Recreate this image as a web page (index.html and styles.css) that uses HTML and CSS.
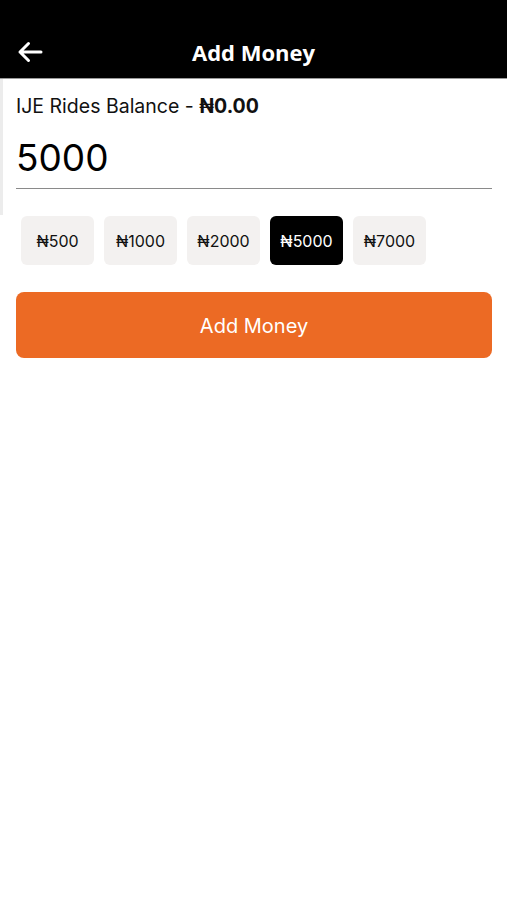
FILE: index.html
```html
<!DOCTYPE html>
<html>
<head>
<meta charset="utf-8">
<link rel="stylesheet" href="styles.css">
</head>
<body>
<div class="screen">
  <header class="topbar">
    <button class="back" aria-label="Back">
      <svg width="28" height="22" viewBox="0 0 28 22"><path d="M25 11H4M12.5 2.5L4 11l8.5 8.5" fill="none" stroke="#fff" stroke-width="3" stroke-linecap="round" stroke-linejoin="round"/></svg>
    </button>
    <h1 class="title">Add Money</h1>
  </header>
  <main class="content">
    <div class="edge"></div>
    <p class="balance">IJE Rides Balance - <b>₦0.00</b></p>
    <div class="amount">5000</div>
    <div class="chips">
      <span class="chip">₦500</span>
      <span class="chip">₦1000</span>
      <span class="chip">₦2000</span>
      <span class="chip active">₦5000</span>
      <span class="chip">₦7000</span>
    </div>
    <button class="submit">Add Money</button>
  </main>
</div>
</body>
</html>
```
FILE: styles.css
```css
* { box-sizing: border-box; }
html, body { margin: 0; padding: 0; background: #fff; }
body { font-family: Inter, "Liberation Sans", "DejaVu Sans", sans-serif; color: #111; }
.screen { width: 507px; height: 900px; position: relative; overflow: hidden; }
.topbar {
  height: 79px; background: #000; position: relative;
  display: flex; align-items: flex-end; justify-content: center;
  padding-bottom: 11px; border-bottom: 1px solid #9a9a9a;
}
.back {
  position: absolute; left: 16px; bottom: 15px;
  background: none; border: 0; padding: 0; width: 28px; height: 22px; display: flex;
}
.title {
  margin: 0; color: #fff; font-family: "Open Sans", sans-serif; font-weight: 700;
  font-size: 22px; line-height: 30px;
}
.content { padding: 0 15px 0 16px; position: relative; }
.edge { position: absolute; left: 0; top: 0; width: 3px; height: 136px; background: #ececec; }
.balance { margin: 0; padding-top: 14px; font-size: 19.5px; line-height: 26px; color: #111; }
.balance b { font-weight: 700; }
.amount {
  margin-top: 19px; font-size: 37px; line-height: 40px; padding-bottom: 10px;
  border-bottom: 1.5px solid #8a8a8a; color: #000;
}
.chips { display: flex; gap: 10px; margin-top: 27px; padding-left: 5px; }
.chip {
  width: 73px; height: 49px; border-radius: 6px; background: #f3f1f0;
  display: flex; align-items: center; justify-content: center;
  font-size: 16px; color: #111;
}
.chip.active { background: #000; color: #fff; }
.submit {
  display: block; width: 100%; height: 66px; margin-top: 27px; border: 0; border-radius: 8px;
  background: #ec6a24; color: #fff; font-family: inherit; font-size: 20px; padding-top: 2px;
}
```
